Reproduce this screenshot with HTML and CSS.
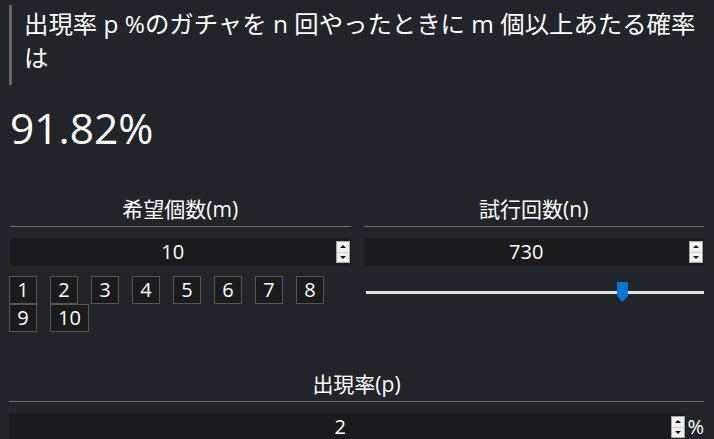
FILE: index.html
```html
<!DOCTYPE html>
<html lang="ja">
<head>
<meta charset="utf-8">
<title>ガチャ確率</title>
<link rel="stylesheet" href="styles.css">
</head>
<body>
<main class="page">
  <blockquote class="question">出現率 p %のガチャを n 回やったときに m 個以上あたる確率は</blockquote>
  <div class="result">91.82%</div>

  <div class="cols">
    <section class="col">
      <h2 class="label">希望個数(m)</h2>
      <div class="field">
        <span class="value">10</span>
        <span class="spin"><span class="up"></span><span class="down"></span></span>
      </div>
      <div class="choices">
        <span class="choice">1</span>
        <span class="choice">2</span>
        <span class="choice">3</span>
        <span class="choice">4</span>
        <span class="choice">5</span>
        <span class="choice">6</span>
        <span class="choice">7</span>
        <span class="choice">8</span>
        <span class="choice">9</span>
        <span class="choice">10</span>
      </div>
    </section>
    <section class="col">
      <h2 class="label">試行回数(n)</h2>
      <div class="field">
        <span class="value">730</span>
        <span class="spin"><span class="up"></span><span class="down"></span></span>
      </div>
      <div class="slider">
        <div class="track"></div>
        <div class="thumb" style="left: 74.3%"></div>
      </div>
    </section>
  </div>

  <section class="rate">
    <h2 class="label">出現率(p)</h2>
    <div class="rate-row">
      <div class="field grow">
        <span class="value">2</span>
        <span class="spin"><span class="up"></span><span class="down"></span></span>
      </div>
      <span class="unit">%</span>
    </div>
  </section>
</main>
</body>
</html>
```

FILE: styles.css
```css
html, body {
  margin: 0;
  padding: 0;
}

body {
  background: #212428;
  color: #ffffff;
  font-family: "Open Sans", "Noto Sans CJK JP", sans-serif;
  overflow: hidden;
}

.page {
  padding: 0 10px;
}

.question {
  margin: 5px 0 0 -1px;
  padding: 2px 0 10px 12px;
  border-left: 3px solid #6b655e;
  font-size: 24.4px;
  line-height: 34px;
}

.result {
  margin-top: 22px;
  font-size: 42.5px;
  line-height: 42px;
  font-weight: 400;
}

.cols {
  margin-top: 46px;
  display: grid;
  grid-template-columns: 1fr 1fr;
  column-gap: 13px;
}

.label {
  margin: 0;
  padding-bottom: 3px;
  border-bottom: 1px solid #77706a;
  font-size: 21px;
  line-height: 28px;
  font-weight: 400;
  text-align: center;
}

.field {
  margin-top: 11px;
  height: 28px;
  background: #191b1d;
  display: flex;
  align-items: center;
  padding-right: 1px;
}

.value {
  flex: 1;
  text-align: center;
  font-size: 20px;
  line-height: 28px;
}

.spin {
  width: 12px;
  height: 20px;
  background: #f0f0f0;
  border: 1px solid #a8a8a8;
  display: flex;
  flex-direction: column;
}

.spin .up,
.spin .down {
  flex: 1;
  display: flex;
  align-items: center;
  justify-content: center;
}

.spin .down {
  border-top: 1px solid #c8c8c8;
}

.spin .up::before {
  content: "";
  border-left: 3px solid transparent;
  border-right: 3px solid transparent;
  border-bottom: 3px solid #111;
}

.spin .down::before {
  content: "";
  border-left: 3px solid transparent;
  border-right: 3px solid transparent;
  border-top: 3px solid #111;
}

.choices {
  margin-top: 10px;
  display: flex;
  flex-wrap: wrap;
  column-gap: 13px;
  margin-left: -1px;
}

.choice {
  box-sizing: border-box;
  min-width: 28px;
  height: 28px;
  padding: 0 7px;
  border: 1px solid #5d564f;
  background: #191b1d;
  font-size: 20px;
  line-height: 26px;
  text-align: center;
}

.slider {
  position: relative;
  margin: 16px 0 0 2px;
  height: 20px;
}

.track {
  position: absolute;
  left: 0;
  right: 0;
  top: 9px;
  height: 3px;
  background: #e2e2e2;
}

.thumb {
  position: absolute;
  top: 0;
  width: 11px;
  height: 20px;
  background: #0078d7;
  clip-path: polygon(0 0, 100% 0, 100% 70%, 50% 100%, 0 70%);
}

.rate {
  margin-top: 38px;
}

.rate .label {
  margin-left: -1px;
}

.rate-row {
  display: flex;
  align-items: flex-end;
}

.grow {
  flex: 1;
  margin-left: -1px;
}

.unit {
  font-size: 20px;
  line-height: 28px;
  margin-left: 1px;
}
```
